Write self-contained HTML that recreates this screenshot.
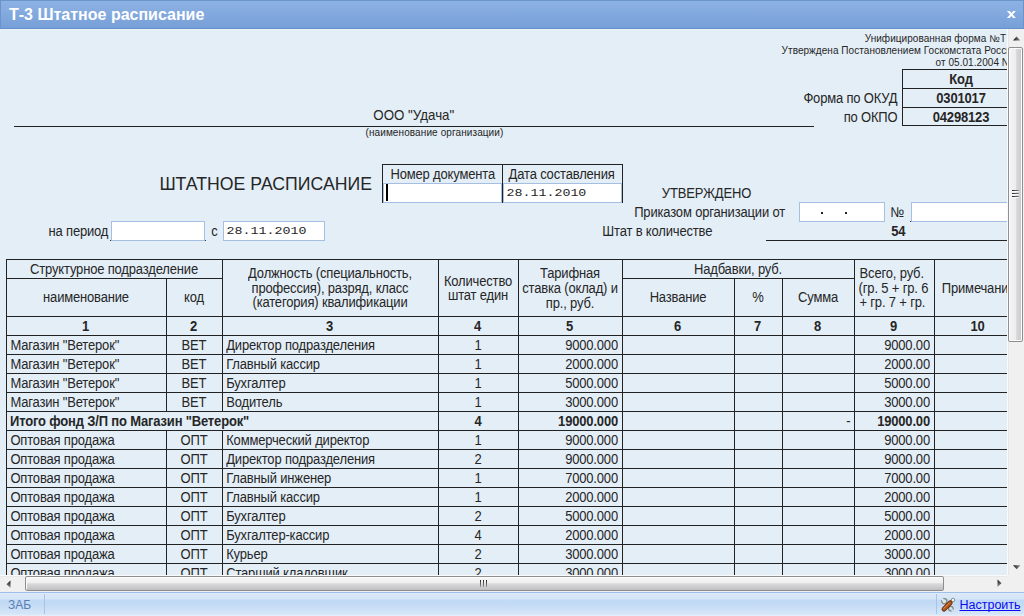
<!DOCTYPE html>
<html><head><meta charset="utf-8"><title>Т-3 Штатное расписание</title>
<style>
html,body{margin:0;padding:0;}
body{width:1024px;height:616px;overflow:hidden;position:relative;background:#e4eef7;font-family:"Liberation Sans",sans-serif;color:#262626;}
.t{position:absolute;white-space:nowrap;}
.l{position:absolute;}
#title{position:absolute;left:0;top:0;width:1024px;height:29px;box-sizing:border-box;border:1px solid #6a95cc;border-bottom:1px solid #6690cc;background:linear-gradient(#8db2e4,#77a0d8);}
#title .tt{position:absolute;left:8px;top:4px;font:bold 16px/20px "Liberation Sans";color:#fff;white-space:nowrap;}
#content{position:absolute;left:0;top:29px;width:1007px;height:546px;overflow:hidden;background:#e4eef7;}
#inner{position:absolute;left:0;top:-29px;width:1100px;height:700px;}
#vs{position:absolute;left:1007px;top:29px;width:17px;height:546px;background:#f0f0f0;}
#hs{position:absolute;left:0;top:575px;width:1007px;height:17px;background:#f0f0f0;}
#corner{position:absolute;left:1007px;top:575px;width:17px;height:17px;background:#f0f0f0;}
#hl{position:absolute;left:1px;top:29px;width:1006px;height:1px;background:#eaf2f8;z-index:2;}
#status{position:absolute;left:0;top:592px;width:1024px;height:24px;box-sizing:border-box;border-top:1px solid #99bbe8;border-top-color:#9dc0ea;background:linear-gradient(#e6f0fb 0px,#d9e7f8 1px,#d6e5f8 6px,#c0d9f4 7px,#c4dbf5 12px,#d6e6f8 21px,#e6f0fa 23px);}
</style></head>
<body>
<div id="title"><div class="tt">Т-3 Штатное расписание</div>
<svg style="position:absolute;left:1004.2px;top:9.2px" width="12" height="9" viewBox="0 0 12 9"><path d="M1.9 1 L4.6 1 L10.9 8 L8.2 8 Z M8.2 1 L10.9 1 L4.6 8 L1.9 8 Z" fill="#fff"/></svg>
</div>
<div id="hl"></div>
<div id="content"><div id="inner">
<div class="l" style="left:902px;top:69px;width:128px;height:1px;background:#222"></div>
<div class="l" style="left:902px;top:88px;width:128px;height:1px;background:#222"></div>
<div class="l" style="left:902px;top:107px;width:128px;height:1px;background:#222"></div>
<div class="l" style="left:902px;top:125px;width:128px;height:1px;background:#222"></div>
<div class="l" style="left:902px;top:69px;width:1px;height:57px;background:#222"></div>
<div class="l" style="left:14px;top:126px;width:800px;height:1px;background:#222"></div>
<div class="l" style="left:382px;top:164px;width:241px;height:39px;border:1px solid #222;border-bottom:0;box-sizing:border-box"></div>
<div class="l" style="left:502px;top:164px;width:1px;height:39px;background:#222"></div>
<div class="l" style="left:383px;top:183px;width:119px;height:20px;background:#fff;border:1px solid #a5bfe2;box-sizing:border-box"></div>
<div class="l" style="left:503px;top:183px;width:119px;height:20px;background:#fff;border:1px solid #a5bfe2;box-sizing:border-box"></div>
<div class="l" style="left:386px;top:184px;width:2px;height:17px;background:#000"></div>
<div class="l" style="left:111px;top:221px;width:94px;height:20px;background:#fff;border:1px solid #a5bfe2;box-sizing:border-box"></div>
<div class="l" style="left:110px;top:240px;width:1px;height:1px;background:#333"></div>
<div class="l" style="left:205px;top:240px;width:1px;height:1px;background:#333"></div>
<div class="l" style="left:223px;top:221px;width:102px;height:20px;background:#fff;border:1px solid #a5bfe2;box-sizing:border-box"></div>
<div class="l" style="left:799px;top:202px;width:86px;height:20px;background:#fff;border:1px solid #a5bfe2;box-sizing:border-box"></div>
<div class="l" style="left:821px;top:212px;width:2px;height:2px;background:#222"></div>
<div class="l" style="left:845px;top:212px;width:2px;height:2px;background:#222"></div>
<div class="l" style="left:910px;top:221px;width:1px;height:1px;background:#333"></div>
<div class="l" style="left:911px;top:202px;width:119px;height:20px;background:#fff;border:1px solid #a5bfe2;box-sizing:border-box"></div>
<div class="l" style="left:766px;top:240px;width:264px;height:1px;background:#222"></div>
<div class="l" style="left:6px;top:259px;width:1024px;height:1px;background:#222"></div>
<div class="l" style="left:6px;top:259px;width:1px;height:341px;background:#222"></div>
<div class="l" style="left:166px;top:259px;width:1px;height:341px;background:#222"></div>
<div class="l" style="left:222px;top:259px;width:1px;height:341px;background:#222"></div>
<div class="l" style="left:438px;top:259px;width:1px;height:341px;background:#222"></div>
<div class="l" style="left:518px;top:259px;width:1px;height:341px;background:#222"></div>
<div class="l" style="left:622px;top:259px;width:1px;height:341px;background:#222"></div>
<div class="l" style="left:734px;top:259px;width:1px;height:341px;background:#222"></div>
<div class="l" style="left:782px;top:259px;width:1px;height:341px;background:#222"></div>
<div class="l" style="left:854px;top:259px;width:1px;height:341px;background:#222"></div>
<div class="l" style="left:934px;top:259px;width:1px;height:341px;background:#222"></div>
<div class="l" style="left:1022px;top:259px;width:1px;height:341px;background:#222"></div>
<div class="l" style="left:6px;top:278px;width:216px;height:1px;background:#222"></div>
<div class="l" style="left:622px;top:278px;width:232px;height:1px;background:#222"></div>
<div class="l" style="left:166px;top:260px;width:1px;height:18px;background:#e4eef7"></div>
<div class="l" style="left:734px;top:260px;width:1px;height:18px;background:#e4eef7"></div>
<div class="l" style="left:782px;top:260px;width:1px;height:18px;background:#e4eef7"></div>
<div class="l" style="left:6px;top:316px;width:1024px;height:1px;background:#222"></div>
<div class="l" style="left:6px;top:335px;width:1024px;height:1px;background:#222"></div>
<div class="l" style="left:6px;top:354px;width:1024px;height:1px;background:#222"></div>
<div class="l" style="left:6px;top:373px;width:1024px;height:1px;background:#222"></div>
<div class="l" style="left:6px;top:392px;width:1024px;height:1px;background:#222"></div>
<div class="l" style="left:6px;top:411px;width:1024px;height:1px;background:#222"></div>
<div class="l" style="left:6px;top:430px;width:1024px;height:1px;background:#222"></div>
<div class="l" style="left:6px;top:449px;width:1024px;height:1px;background:#222"></div>
<div class="l" style="left:6px;top:468px;width:1024px;height:1px;background:#222"></div>
<div class="l" style="left:6px;top:487px;width:1024px;height:1px;background:#222"></div>
<div class="l" style="left:6px;top:506px;width:1024px;height:1px;background:#222"></div>
<div class="l" style="left:6px;top:525px;width:1024px;height:1px;background:#222"></div>
<div class="l" style="left:6px;top:544px;width:1024px;height:1px;background:#222"></div>
<div class="l" style="left:6px;top:563px;width:1024px;height:1px;background:#222"></div>
<div class="l" style="left:6px;top:582px;width:1024px;height:1px;background:#222"></div>
<div class="l" style="left:166px;top:412px;width:1px;height:18px;background:#e4eef7"></div>
<div class="l" style="left:222px;top:412px;width:1px;height:18px;background:#e4eef7"></div>
<div class="t" style="left:864.7px;top:33px;font:normal 10px/12px 'Liberation Sans';letter-spacing:0.050px;">Унифицированная форма №Т</div>
<div class="t" style="left:781.6px;top:45px;font:normal 10px/12px 'Liberation Sans';letter-spacing:0.050px;">Утверждена Постановлением Госкомстата России</div>
<div class="t" style="left:935.6px;top:57px;font:normal 10px/12px 'Liberation Sans';letter-spacing:0.050px;">от 05.01.2004 N 1</div>
<div class="t" style="left:902.5px;top:72px;font:bold 13px/16px 'Liberation Sans';letter-spacing:-0.170px;transform:scaleY(1.08);transform-origin:0 12px;width:117px;text-align:center;">Код</div>
<div class="t" style="left:902.5px;top:91px;font:bold 13px/16px 'Liberation Sans';letter-spacing:-0.170px;transform:scaleY(1.08);transform-origin:0 12px;width:117px;text-align:center;">0301017</div>
<div class="t" style="left:902.5px;top:110px;font:bold 13px/16px 'Liberation Sans';letter-spacing:-0.170px;transform:scaleY(1.08);transform-origin:0 12px;width:117px;text-align:center;">04298123</div>
<div class="t" style="left:600px;top:91px;font:normal 13px/16px 'Liberation Sans';letter-spacing:-0.170px;transform:scaleY(1.08);transform-origin:0 12px;width:297.5px;text-align:right;">Форма по ОКУД</div>
<div class="t" style="left:600px;top:110px;font:normal 13px/16px 'Liberation Sans';letter-spacing:-0.170px;transform:scaleY(1.08);transform-origin:0 12px;width:297.5px;text-align:right;">по ОКПО</div>
<div class="t" style="left:373.3px;top:107px;font:normal 13.33px/17px 'Liberation Sans';transform:scaleY(1.08);transform-origin:0 13px;">ООО "Удача"</div>
<div class="t" style="left:365.5px;top:127px;font:normal 10px/12px 'Liberation Sans';letter-spacing:0.100px;">(наименование организации)</div>
<div class="t" style="left:159.4px;top:173px;font:normal 17.7px/22px 'Liberation Sans';transform:scaleY(1.08);transform-origin:0 17px;">ШТАТНОЕ РАСПИСАНИЕ</div>
<div class="t" style="left:390.5px;top:167px;font:normal 13px/16px 'Liberation Sans';letter-spacing:-0.170px;transform:scaleY(1.08);transform-origin:0 12px;">Номер документа</div>
<div class="t" style="left:508.6px;top:167px;font:normal 13px/16px 'Liberation Sans';letter-spacing:-0.170px;transform:scaleY(1.08);transform-origin:0 12px;">Дата составления</div>
<div class="t" style="left:506.4px;top:184px;font:normal 13.33px/17px 'Liberation Mono';transform:scaleY(0.85);transform-origin:0 12px;">28.11.2010</div>
<div class="t" style="left:48.5px;top:224px;font:normal 13px/16px 'Liberation Sans';letter-spacing:-0.170px;transform:scaleY(1.08);transform-origin:0 12px;">на период</div>
<div class="t" style="left:211.2px;top:224px;font:normal 13px/16px 'Liberation Sans';letter-spacing:-0.170px;transform:scaleY(1.08);transform-origin:0 12px;">с</div>
<div class="t" style="left:226.5px;top:222px;font:normal 13.33px/17px 'Liberation Mono';transform:scaleY(0.85);transform-origin:0 12px;">28.11.2010</div>
<div class="t" style="left:661.8px;top:186px;font:normal 13px/16px 'Liberation Sans';letter-spacing:-0.170px;transform:scaleY(1.08);transform-origin:0 12px;">УТВЕРЖДЕНО</div>
<div class="t" style="left:634.2px;top:205px;font:normal 13px/16px 'Liberation Sans';letter-spacing:-0.170px;transform:scaleY(1.08);transform-origin:0 12px;">Приказом организации от</div>
<div class="t" style="left:890.4px;top:205px;font:normal 13px/16px 'Liberation Sans';letter-spacing:-0.170px;transform:scaleY(1.08);transform-origin:0 12px;">№</div>
<div class="t" style="left:602.3px;top:224px;font:normal 13px/16px 'Liberation Sans';letter-spacing:-0.170px;transform:scaleY(1.08);transform-origin:0 12px;">Штат в количестве</div>
<div class="t" style="left:891.2px;top:224px;font:bold 13px/16px 'Liberation Sans';letter-spacing:-0.170px;transform:scaleY(1.08);transform-origin:0 12px;">54</div>
<div class="t" style="left:6.5px;top:262px;font:normal 13px/16px 'Liberation Sans';letter-spacing:-0.170px;transform:scaleY(1.08);transform-origin:0 12px;width:215px;text-align:center;">Структурное подразделение</div>
<div class="t" style="left:6.5px;top:290px;font:normal 13px/16px 'Liberation Sans';letter-spacing:-0.170px;transform:scaleY(1.08);transform-origin:0 12px;width:159px;text-align:center;">наименование</div>
<div class="t" style="left:166.5px;top:290px;font:normal 13px/16px 'Liberation Sans';letter-spacing:-0.170px;transform:scaleY(1.08);transform-origin:0 12px;width:55px;text-align:center;">код</div>
<div class="t" style="left:222.5px;top:266px;font:normal 13px/16px 'Liberation Sans';letter-spacing:-0.170px;transform:scaleY(1.08);transform-origin:0 12px;width:215px;text-align:center;">Должность (специальность,</div>
<div class="t" style="left:222.5px;top:281px;font:normal 13px/16px 'Liberation Sans';letter-spacing:-0.170px;transform:scaleY(1.08);transform-origin:0 12px;width:215px;text-align:center;">профессия), разряд, класс</div>
<div class="t" style="left:222.5px;top:295px;font:normal 13px/16px 'Liberation Sans';letter-spacing:-0.170px;transform:scaleY(1.08);transform-origin:0 12px;width:215px;text-align:center;">(категория) квалификации</div>
<div class="t" style="left:438.5px;top:274px;font:normal 13px/16px 'Liberation Sans';letter-spacing:-0.170px;transform:scaleY(1.08);transform-origin:0 12px;width:79px;text-align:center;">Количество</div>
<div class="t" style="left:438.5px;top:288px;font:normal 13px/16px 'Liberation Sans';letter-spacing:-0.170px;transform:scaleY(1.08);transform-origin:0 12px;width:79px;text-align:center;">штат един</div>
<div class="t" style="left:518.5px;top:266px;font:normal 13px/16px 'Liberation Sans';letter-spacing:-0.170px;transform:scaleY(1.08);transform-origin:0 12px;width:103px;text-align:center;">Тарифная</div>
<div class="t" style="left:518.5px;top:281px;font:normal 13px/16px 'Liberation Sans';letter-spacing:-0.170px;transform:scaleY(1.08);transform-origin:0 12px;width:103px;text-align:center;">ставка (оклад) и</div>
<div class="t" style="left:518.5px;top:296px;font:normal 13px/16px 'Liberation Sans';letter-spacing:-0.170px;transform:scaleY(1.08);transform-origin:0 12px;width:103px;text-align:center;">пр., руб.</div>
<div class="t" style="left:622.5px;top:262px;font:normal 13px/16px 'Liberation Sans';letter-spacing:-0.170px;transform:scaleY(1.08);transform-origin:0 12px;width:231px;text-align:center;">Надбавки, руб.</div>
<div class="t" style="left:622.5px;top:290px;font:normal 13px/16px 'Liberation Sans';letter-spacing:-0.170px;transform:scaleY(1.08);transform-origin:0 12px;width:111px;text-align:center;">Название</div>
<div class="t" style="left:734.5px;top:290px;font:normal 13px/16px 'Liberation Sans';letter-spacing:-0.170px;transform:scaleY(1.08);transform-origin:0 12px;width:47px;text-align:center;">%</div>
<div class="t" style="left:782.5px;top:290px;font:normal 13px/16px 'Liberation Sans';letter-spacing:-0.170px;transform:scaleY(1.08);transform-origin:0 12px;width:71px;text-align:center;">Сумма</div>
<div class="t" style="left:859.6px;top:266px;font:normal 13px/16px 'Liberation Sans';letter-spacing:-0.170px;transform:scaleY(1.08);transform-origin:0 12px;">Всего, руб.</div>
<div class="t" style="left:858.6px;top:281px;font:normal 13px/16px 'Liberation Sans';letter-spacing:-0.170px;transform:scaleY(1.08);transform-origin:0 12px;">(гр. 5 + гр. 6</div>
<div class="t" style="left:859.4px;top:295px;font:normal 13px/16px 'Liberation Sans';letter-spacing:-0.170px;transform:scaleY(1.08);transform-origin:0 12px;">+ гр. 7 + гр.</div>
<div class="t" style="left:941.8px;top:281px;font:normal 13px/16px 'Liberation Sans';letter-spacing:-0.170px;transform:scaleY(1.08);transform-origin:0 12px;">Примечание</div>
<div class="t" style="left:6px;top:319px;font:bold 13px/16px 'Liberation Sans';letter-spacing:-0.170px;transform:scaleY(1.08);transform-origin:0 12px;width:159px;text-align:center;">1</div>
<div class="t" style="left:166px;top:319px;font:bold 13px/16px 'Liberation Sans';letter-spacing:-0.170px;transform:scaleY(1.08);transform-origin:0 12px;width:55px;text-align:center;">2</div>
<div class="t" style="left:222px;top:319px;font:bold 13px/16px 'Liberation Sans';letter-spacing:-0.170px;transform:scaleY(1.08);transform-origin:0 12px;width:215px;text-align:center;">3</div>
<div class="t" style="left:438px;top:319px;font:bold 13px/16px 'Liberation Sans';letter-spacing:-0.170px;transform:scaleY(1.08);transform-origin:0 12px;width:79px;text-align:center;">4</div>
<div class="t" style="left:518px;top:319px;font:bold 13px/16px 'Liberation Sans';letter-spacing:-0.170px;transform:scaleY(1.08);transform-origin:0 12px;width:103px;text-align:center;">5</div>
<div class="t" style="left:622px;top:319px;font:bold 13px/16px 'Liberation Sans';letter-spacing:-0.170px;transform:scaleY(1.08);transform-origin:0 12px;width:111px;text-align:center;">6</div>
<div class="t" style="left:734px;top:319px;font:bold 13px/16px 'Liberation Sans';letter-spacing:-0.170px;transform:scaleY(1.08);transform-origin:0 12px;width:47px;text-align:center;">7</div>
<div class="t" style="left:782px;top:319px;font:bold 13px/16px 'Liberation Sans';letter-spacing:-0.170px;transform:scaleY(1.08);transform-origin:0 12px;width:71px;text-align:center;">8</div>
<div class="t" style="left:854px;top:319px;font:bold 13px/16px 'Liberation Sans';letter-spacing:-0.170px;transform:scaleY(1.08);transform-origin:0 12px;width:79px;text-align:center;">9</div>
<div class="t" style="left:934px;top:319px;font:bold 13px/16px 'Liberation Sans';letter-spacing:-0.170px;transform:scaleY(1.08);transform-origin:0 12px;width:87px;text-align:center;">10</div>
<div class="t" style="left:10.4px;top:338px;font:normal 13px/16px 'Liberation Sans';letter-spacing:-0.170px;transform:scaleY(1.08);transform-origin:0 12px;">Магазин "Ветерок"</div>
<div class="t" style="left:166.5px;top:338px;font:normal 13px/16px 'Liberation Sans';letter-spacing:-0.170px;transform:scaleY(1.08);transform-origin:0 12px;width:55px;text-align:center;">ВЕТ</div>
<div class="t" style="left:226.2px;top:338px;font:normal 13px/16px 'Liberation Sans';letter-spacing:-0.170px;transform:scaleY(1.08);transform-origin:0 12px;">Директор подразделения</div>
<div class="t" style="left:438.5px;top:338px;font:normal 13px/16px 'Liberation Sans';letter-spacing:-0.170px;transform:scaleY(1.08);transform-origin:0 12px;width:79px;text-align:center;">1</div>
<div class="t" style="left:318px;top:338px;font:normal 13px/16px 'Liberation Sans';letter-spacing:-0.170px;transform:scaleY(1.08);transform-origin:0 12px;width:300px;text-align:right;">9000.000</div>
<div class="t" style="left:630px;top:338px;font:normal 13px/16px 'Liberation Sans';letter-spacing:-0.170px;transform:scaleY(1.08);transform-origin:0 12px;width:300px;text-align:right;">9000.00</div>
<div class="t" style="left:10.4px;top:357px;font:normal 13px/16px 'Liberation Sans';letter-spacing:-0.170px;transform:scaleY(1.08);transform-origin:0 12px;">Магазин "Ветерок"</div>
<div class="t" style="left:166.5px;top:357px;font:normal 13px/16px 'Liberation Sans';letter-spacing:-0.170px;transform:scaleY(1.08);transform-origin:0 12px;width:55px;text-align:center;">ВЕТ</div>
<div class="t" style="left:226.2px;top:357px;font:normal 13px/16px 'Liberation Sans';letter-spacing:-0.170px;transform:scaleY(1.08);transform-origin:0 12px;">Главный кассир</div>
<div class="t" style="left:438.5px;top:357px;font:normal 13px/16px 'Liberation Sans';letter-spacing:-0.170px;transform:scaleY(1.08);transform-origin:0 12px;width:79px;text-align:center;">1</div>
<div class="t" style="left:318px;top:357px;font:normal 13px/16px 'Liberation Sans';letter-spacing:-0.170px;transform:scaleY(1.08);transform-origin:0 12px;width:300px;text-align:right;">2000.000</div>
<div class="t" style="left:630px;top:357px;font:normal 13px/16px 'Liberation Sans';letter-spacing:-0.170px;transform:scaleY(1.08);transform-origin:0 12px;width:300px;text-align:right;">2000.00</div>
<div class="t" style="left:10.4px;top:376px;font:normal 13px/16px 'Liberation Sans';letter-spacing:-0.170px;transform:scaleY(1.08);transform-origin:0 12px;">Магазин "Ветерок"</div>
<div class="t" style="left:166.5px;top:376px;font:normal 13px/16px 'Liberation Sans';letter-spacing:-0.170px;transform:scaleY(1.08);transform-origin:0 12px;width:55px;text-align:center;">ВЕТ</div>
<div class="t" style="left:226.2px;top:376px;font:normal 13px/16px 'Liberation Sans';letter-spacing:-0.170px;transform:scaleY(1.08);transform-origin:0 12px;">Бухгалтер</div>
<div class="t" style="left:438.5px;top:376px;font:normal 13px/16px 'Liberation Sans';letter-spacing:-0.170px;transform:scaleY(1.08);transform-origin:0 12px;width:79px;text-align:center;">1</div>
<div class="t" style="left:318px;top:376px;font:normal 13px/16px 'Liberation Sans';letter-spacing:-0.170px;transform:scaleY(1.08);transform-origin:0 12px;width:300px;text-align:right;">5000.000</div>
<div class="t" style="left:630px;top:376px;font:normal 13px/16px 'Liberation Sans';letter-spacing:-0.170px;transform:scaleY(1.08);transform-origin:0 12px;width:300px;text-align:right;">5000.00</div>
<div class="t" style="left:10.4px;top:395px;font:normal 13px/16px 'Liberation Sans';letter-spacing:-0.170px;transform:scaleY(1.08);transform-origin:0 12px;">Магазин "Ветерок"</div>
<div class="t" style="left:166.5px;top:395px;font:normal 13px/16px 'Liberation Sans';letter-spacing:-0.170px;transform:scaleY(1.08);transform-origin:0 12px;width:55px;text-align:center;">ВЕТ</div>
<div class="t" style="left:226.2px;top:395px;font:normal 13px/16px 'Liberation Sans';letter-spacing:-0.170px;transform:scaleY(1.08);transform-origin:0 12px;">Водитель</div>
<div class="t" style="left:438.5px;top:395px;font:normal 13px/16px 'Liberation Sans';letter-spacing:-0.170px;transform:scaleY(1.08);transform-origin:0 12px;width:79px;text-align:center;">1</div>
<div class="t" style="left:318px;top:395px;font:normal 13px/16px 'Liberation Sans';letter-spacing:-0.170px;transform:scaleY(1.08);transform-origin:0 12px;width:300px;text-align:right;">3000.000</div>
<div class="t" style="left:630px;top:395px;font:normal 13px/16px 'Liberation Sans';letter-spacing:-0.170px;transform:scaleY(1.08);transform-origin:0 12px;width:300px;text-align:right;">3000.00</div>
<div class="t" style="left:10px;top:414px;font:bold 13px/16px 'Liberation Sans';letter-spacing:-0.170px;transform:scaleY(1.08);transform-origin:0 12px;">Итого фонд З/П по Магазин "Ветерок"</div>
<div class="t" style="left:438.5px;top:414px;font:bold 13px/16px 'Liberation Sans';letter-spacing:-0.170px;transform:scaleY(1.08);transform-origin:0 12px;width:79px;text-align:center;">4</div>
<div class="t" style="left:318px;top:414px;font:bold 13px/16px 'Liberation Sans';letter-spacing:-0.170px;transform:scaleY(1.08);transform-origin:0 12px;width:300px;text-align:right;">19000.000</div>
<div class="t" style="left:550.5px;top:414px;font:normal 13px/16px 'Liberation Sans';letter-spacing:-0.170px;transform:scaleY(1.08);transform-origin:0 12px;width:300px;text-align:right;">-</div>
<div class="t" style="left:630px;top:414px;font:bold 13px/16px 'Liberation Sans';letter-spacing:-0.170px;transform:scaleY(1.08);transform-origin:0 12px;width:300px;text-align:right;">19000.00</div>
<div class="t" style="left:10.4px;top:433px;font:normal 13px/16px 'Liberation Sans';letter-spacing:-0.170px;transform:scaleY(1.08);transform-origin:0 12px;">Оптовая продажа</div>
<div class="t" style="left:166.5px;top:433px;font:normal 13px/16px 'Liberation Sans';letter-spacing:-0.170px;transform:scaleY(1.08);transform-origin:0 12px;width:55px;text-align:center;">ОПТ</div>
<div class="t" style="left:226.2px;top:433px;font:normal 13px/16px 'Liberation Sans';letter-spacing:-0.170px;transform:scaleY(1.08);transform-origin:0 12px;">Коммерческий директор</div>
<div class="t" style="left:438.5px;top:433px;font:normal 13px/16px 'Liberation Sans';letter-spacing:-0.170px;transform:scaleY(1.08);transform-origin:0 12px;width:79px;text-align:center;">1</div>
<div class="t" style="left:318px;top:433px;font:normal 13px/16px 'Liberation Sans';letter-spacing:-0.170px;transform:scaleY(1.08);transform-origin:0 12px;width:300px;text-align:right;">9000.000</div>
<div class="t" style="left:630px;top:433px;font:normal 13px/16px 'Liberation Sans';letter-spacing:-0.170px;transform:scaleY(1.08);transform-origin:0 12px;width:300px;text-align:right;">9000.00</div>
<div class="t" style="left:10.4px;top:452px;font:normal 13px/16px 'Liberation Sans';letter-spacing:-0.170px;transform:scaleY(1.08);transform-origin:0 12px;">Оптовая продажа</div>
<div class="t" style="left:166.5px;top:452px;font:normal 13px/16px 'Liberation Sans';letter-spacing:-0.170px;transform:scaleY(1.08);transform-origin:0 12px;width:55px;text-align:center;">ОПТ</div>
<div class="t" style="left:226.2px;top:452px;font:normal 13px/16px 'Liberation Sans';letter-spacing:-0.170px;transform:scaleY(1.08);transform-origin:0 12px;">Директор подразделения</div>
<div class="t" style="left:438.5px;top:452px;font:normal 13px/16px 'Liberation Sans';letter-spacing:-0.170px;transform:scaleY(1.08);transform-origin:0 12px;width:79px;text-align:center;">2</div>
<div class="t" style="left:318px;top:452px;font:normal 13px/16px 'Liberation Sans';letter-spacing:-0.170px;transform:scaleY(1.08);transform-origin:0 12px;width:300px;text-align:right;">9000.000</div>
<div class="t" style="left:630px;top:452px;font:normal 13px/16px 'Liberation Sans';letter-spacing:-0.170px;transform:scaleY(1.08);transform-origin:0 12px;width:300px;text-align:right;">9000.00</div>
<div class="t" style="left:10.4px;top:471px;font:normal 13px/16px 'Liberation Sans';letter-spacing:-0.170px;transform:scaleY(1.08);transform-origin:0 12px;">Оптовая продажа</div>
<div class="t" style="left:166.5px;top:471px;font:normal 13px/16px 'Liberation Sans';letter-spacing:-0.170px;transform:scaleY(1.08);transform-origin:0 12px;width:55px;text-align:center;">ОПТ</div>
<div class="t" style="left:226.2px;top:471px;font:normal 13px/16px 'Liberation Sans';letter-spacing:-0.170px;transform:scaleY(1.08);transform-origin:0 12px;">Главный инженер</div>
<div class="t" style="left:438.5px;top:471px;font:normal 13px/16px 'Liberation Sans';letter-spacing:-0.170px;transform:scaleY(1.08);transform-origin:0 12px;width:79px;text-align:center;">1</div>
<div class="t" style="left:318px;top:471px;font:normal 13px/16px 'Liberation Sans';letter-spacing:-0.170px;transform:scaleY(1.08);transform-origin:0 12px;width:300px;text-align:right;">7000.000</div>
<div class="t" style="left:630px;top:471px;font:normal 13px/16px 'Liberation Sans';letter-spacing:-0.170px;transform:scaleY(1.08);transform-origin:0 12px;width:300px;text-align:right;">7000.00</div>
<div class="t" style="left:10.4px;top:490px;font:normal 13px/16px 'Liberation Sans';letter-spacing:-0.170px;transform:scaleY(1.08);transform-origin:0 12px;">Оптовая продажа</div>
<div class="t" style="left:166.5px;top:490px;font:normal 13px/16px 'Liberation Sans';letter-spacing:-0.170px;transform:scaleY(1.08);transform-origin:0 12px;width:55px;text-align:center;">ОПТ</div>
<div class="t" style="left:226.2px;top:490px;font:normal 13px/16px 'Liberation Sans';letter-spacing:-0.170px;transform:scaleY(1.08);transform-origin:0 12px;">Главный кассир</div>
<div class="t" style="left:438.5px;top:490px;font:normal 13px/16px 'Liberation Sans';letter-spacing:-0.170px;transform:scaleY(1.08);transform-origin:0 12px;width:79px;text-align:center;">1</div>
<div class="t" style="left:318px;top:490px;font:normal 13px/16px 'Liberation Sans';letter-spacing:-0.170px;transform:scaleY(1.08);transform-origin:0 12px;width:300px;text-align:right;">2000.000</div>
<div class="t" style="left:630px;top:490px;font:normal 13px/16px 'Liberation Sans';letter-spacing:-0.170px;transform:scaleY(1.08);transform-origin:0 12px;width:300px;text-align:right;">2000.00</div>
<div class="t" style="left:10.4px;top:509px;font:normal 13px/16px 'Liberation Sans';letter-spacing:-0.170px;transform:scaleY(1.08);transform-origin:0 12px;">Оптовая продажа</div>
<div class="t" style="left:166.5px;top:509px;font:normal 13px/16px 'Liberation Sans';letter-spacing:-0.170px;transform:scaleY(1.08);transform-origin:0 12px;width:55px;text-align:center;">ОПТ</div>
<div class="t" style="left:226.2px;top:509px;font:normal 13px/16px 'Liberation Sans';letter-spacing:-0.170px;transform:scaleY(1.08);transform-origin:0 12px;">Бухгалтер</div>
<div class="t" style="left:438.5px;top:509px;font:normal 13px/16px 'Liberation Sans';letter-spacing:-0.170px;transform:scaleY(1.08);transform-origin:0 12px;width:79px;text-align:center;">2</div>
<div class="t" style="left:318px;top:509px;font:normal 13px/16px 'Liberation Sans';letter-spacing:-0.170px;transform:scaleY(1.08);transform-origin:0 12px;width:300px;text-align:right;">5000.000</div>
<div class="t" style="left:630px;top:509px;font:normal 13px/16px 'Liberation Sans';letter-spacing:-0.170px;transform:scaleY(1.08);transform-origin:0 12px;width:300px;text-align:right;">5000.00</div>
<div class="t" style="left:10.4px;top:528px;font:normal 13px/16px 'Liberation Sans';letter-spacing:-0.170px;transform:scaleY(1.08);transform-origin:0 12px;">Оптовая продажа</div>
<div class="t" style="left:166.5px;top:528px;font:normal 13px/16px 'Liberation Sans';letter-spacing:-0.170px;transform:scaleY(1.08);transform-origin:0 12px;width:55px;text-align:center;">ОПТ</div>
<div class="t" style="left:226.2px;top:528px;font:normal 13px/16px 'Liberation Sans';letter-spacing:-0.170px;transform:scaleY(1.08);transform-origin:0 12px;">Бухгалтер-кассир</div>
<div class="t" style="left:438.5px;top:528px;font:normal 13px/16px 'Liberation Sans';letter-spacing:-0.170px;transform:scaleY(1.08);transform-origin:0 12px;width:79px;text-align:center;">4</div>
<div class="t" style="left:318px;top:528px;font:normal 13px/16px 'Liberation Sans';letter-spacing:-0.170px;transform:scaleY(1.08);transform-origin:0 12px;width:300px;text-align:right;">2000.000</div>
<div class="t" style="left:630px;top:528px;font:normal 13px/16px 'Liberation Sans';letter-spacing:-0.170px;transform:scaleY(1.08);transform-origin:0 12px;width:300px;text-align:right;">2000.00</div>
<div class="t" style="left:10.4px;top:547px;font:normal 13px/16px 'Liberation Sans';letter-spacing:-0.170px;transform:scaleY(1.08);transform-origin:0 12px;">Оптовая продажа</div>
<div class="t" style="left:166.5px;top:547px;font:normal 13px/16px 'Liberation Sans';letter-spacing:-0.170px;transform:scaleY(1.08);transform-origin:0 12px;width:55px;text-align:center;">ОПТ</div>
<div class="t" style="left:226.2px;top:547px;font:normal 13px/16px 'Liberation Sans';letter-spacing:-0.170px;transform:scaleY(1.08);transform-origin:0 12px;">Курьер</div>
<div class="t" style="left:438.5px;top:547px;font:normal 13px/16px 'Liberation Sans';letter-spacing:-0.170px;transform:scaleY(1.08);transform-origin:0 12px;width:79px;text-align:center;">2</div>
<div class="t" style="left:318px;top:547px;font:normal 13px/16px 'Liberation Sans';letter-spacing:-0.170px;transform:scaleY(1.08);transform-origin:0 12px;width:300px;text-align:right;">3000.000</div>
<div class="t" style="left:630px;top:547px;font:normal 13px/16px 'Liberation Sans';letter-spacing:-0.170px;transform:scaleY(1.08);transform-origin:0 12px;width:300px;text-align:right;">3000.00</div>
<div class="t" style="left:10.4px;top:566px;font:normal 13px/16px 'Liberation Sans';letter-spacing:-0.170px;transform:scaleY(1.08);transform-origin:0 12px;">Оптовая продажа</div>
<div class="t" style="left:166.5px;top:566px;font:normal 13px/16px 'Liberation Sans';letter-spacing:-0.170px;transform:scaleY(1.08);transform-origin:0 12px;width:55px;text-align:center;">ОПТ</div>
<div class="t" style="left:226.2px;top:566px;font:normal 13px/16px 'Liberation Sans';letter-spacing:-0.170px;transform:scaleY(1.08);transform-origin:0 12px;">Старший кладовщик</div>
<div class="t" style="left:438.5px;top:566px;font:normal 13px/16px 'Liberation Sans';letter-spacing:-0.170px;transform:scaleY(1.08);transform-origin:0 12px;width:79px;text-align:center;">2</div>
<div class="t" style="left:318px;top:566px;font:normal 13px/16px 'Liberation Sans';letter-spacing:-0.170px;transform:scaleY(1.08);transform-origin:0 12px;width:300px;text-align:right;">3000.000</div>
<div class="t" style="left:630px;top:566px;font:normal 13px/16px 'Liberation Sans';letter-spacing:-0.170px;transform:scaleY(1.08);transform-origin:0 12px;width:300px;text-align:right;">3000.00</div>
</div></div>
<div id="vs">
 <div style="position:absolute;left:0;top:0;width:1px;height:546px;background:#fafafa"></div>
 <div style="position:absolute;left:1px;top:0;width:1px;height:546px;background:#e6e6e6"></div>
 <svg style="position:absolute;left:5.5px;top:6.5px" width="8" height="5" viewBox="0 0 8 5"><defs><linearGradient id="ga" x1="0" x2="1"><stop offset="0" stop-color="#111"/><stop offset="1" stop-color="#999"/></linearGradient></defs><path d="M0 4.5 L3.5 0.5 L7.5 4.5 Z" fill="url(#ga)"/></svg>
 <div style="position:absolute;left:1px;top:18px;width:15px;height:295px;box-sizing:border-box;border:1px solid #8e8e8e;border-radius:2px;box-shadow:inset 0 0 0 1px #fbfbfb;background:linear-gradient(90deg,#f4f4f4 0,#ededed 50%,#dcdcdf 52%,#cbcbd0 90%,#e8e8e8 100%)"></div>
 <div style="position:absolute;left:5px;top:161px;width:7px;height:1px;background:linear-gradient(90deg,#222,#888)"></div>
 <div style="position:absolute;left:5px;top:164px;width:7px;height:1px;background:linear-gradient(90deg,#222,#888)"></div>
 <div style="position:absolute;left:5px;top:167px;width:7px;height:1px;background:linear-gradient(90deg,#222,#888)"></div>
 <div style="position:absolute;left:5px;top:162px;width:7px;height:1px;background:#fff;opacity:.7"></div>
 <div style="position:absolute;left:5px;top:165px;width:7px;height:1px;background:#fff;opacity:.7"></div>
 <div style="position:absolute;left:5px;top:168px;width:7px;height:1px;background:#fff;opacity:.7"></div>
 <svg style="position:absolute;left:5.5px;top:536px" width="8" height="5" viewBox="0 0 8 5"><path d="M0 0.3 L7.5 0.3 L3.7 4.3 Z" fill="url(#ga)"/></svg>
</div>
<div id="hs">
 <div style="position:absolute;left:0;top:0;width:1007px;height:1px;background:#fafafa"></div>
 <div style="position:absolute;left:0;top:1px;width:1007px;height:1px;background:#e8e8e8"></div>
 <svg style="position:absolute;left:5.5px;top:4.5px" width="5" height="9" viewBox="0 0 5 9"><defs><linearGradient id="gb" x1="0" x2="0" y1="0" y2="1"><stop offset="0" stop-color="#111"/><stop offset="1" stop-color="#999"/></linearGradient></defs><path d="M4.5 0.5 L4.5 8 L0.5 4.2 Z" fill="url(#gb)"/></svg>
 <div style="position:absolute;left:25px;top:1px;width:919px;height:15px;box-sizing:border-box;border:1px solid #8e8e8e;border-radius:2px;box-shadow:inset 1px 1px 0 #fbfbfb;background:linear-gradient(#f8f8f8 0,#efefef 45%,#dadadb 52%,#c4c4c8 92%,#bcbcc0 100%)"></div>
 <div style="position:absolute;left:480px;top:5px;width:1px;height:7px;background:linear-gradient(#222,#999)"></div>
 <div style="position:absolute;left:483px;top:5px;width:1px;height:7px;background:linear-gradient(#222,#999)"></div>
 <div style="position:absolute;left:486px;top:5px;width:1px;height:7px;background:linear-gradient(#222,#999)"></div>
 <svg style="position:absolute;left:996.5px;top:3.8px" width="6" height="9" viewBox="0 0 6 9"><path d="M0.5 0.5 L0.5 8 L4.5 4.2 Z" fill="url(#gb)"/></svg>
</div>
<div id="corner"></div>
<div id="status">
 <div class="t" style="left:8px;top:5px;font-size:12px;line-height:14px;color:#5b7db5">ЗАБ</div>
 <div class="l" style="left:44px;top:1px;width:1px;height:20px;background:#a8c4e6"></div>
 <div class="l" style="left:936px;top:1px;width:1px;height:20px;background:#a8c4e6"></div>
 <svg style="position:absolute;left:940px;top:4px" width="16" height="16" viewBox="0 0 16 16">
  <path d="M4.3 4.3 L10.6 11.4" stroke="#7f8886" stroke-width="2.6"/>
  <path d="M4.3 4.3 L10.6 11.4" stroke="#d3d9d7" stroke-width="1.1"/>
  <circle cx="4.3" cy="4.3" r="2.6" fill="#dde3e1" stroke="#7f8886" stroke-width="1.3"/>
  <path d="M4.1 4.1 L1.2 1.2" stroke="#dae7f6" stroke-width="2"/>
  <circle cx="10.8" cy="11.6" r="2.3" fill="#dde3e1" stroke="#7f8886" stroke-width="1.3"/>
  <path d="M11 11.8 L13.8 14.6" stroke="#c9dcf3" stroke-width="1.9"/>
  <path d="M13 3 L9.6 6.4" stroke="#8e9896" stroke-width="1.5"/>
  <circle cx="13" cy="3" r="1.8" fill="#eef3f3" stroke="#7e8888" stroke-width="0.9"/>
  <path d="M10.2 5.9 L4 12.1" stroke="#5e2606" stroke-width="4.8" stroke-linecap="round"/>
  <path d="M10.2 5.9 L4 12.1" stroke="#b4561a" stroke-width="3.2" stroke-linecap="round"/>
  <path d="M9.4 5.9 L3.9 11.4" stroke="#e49a5a" stroke-width="0.9" stroke-linecap="round"/>
 </svg>
 <div class="t" style="left:959.5px;top:5px;font-size:12.5px;line-height:14px;color:#0a0af5;text-decoration:underline;text-decoration-skip-ink:none">Настроить</div>
</div>
</body></html>
